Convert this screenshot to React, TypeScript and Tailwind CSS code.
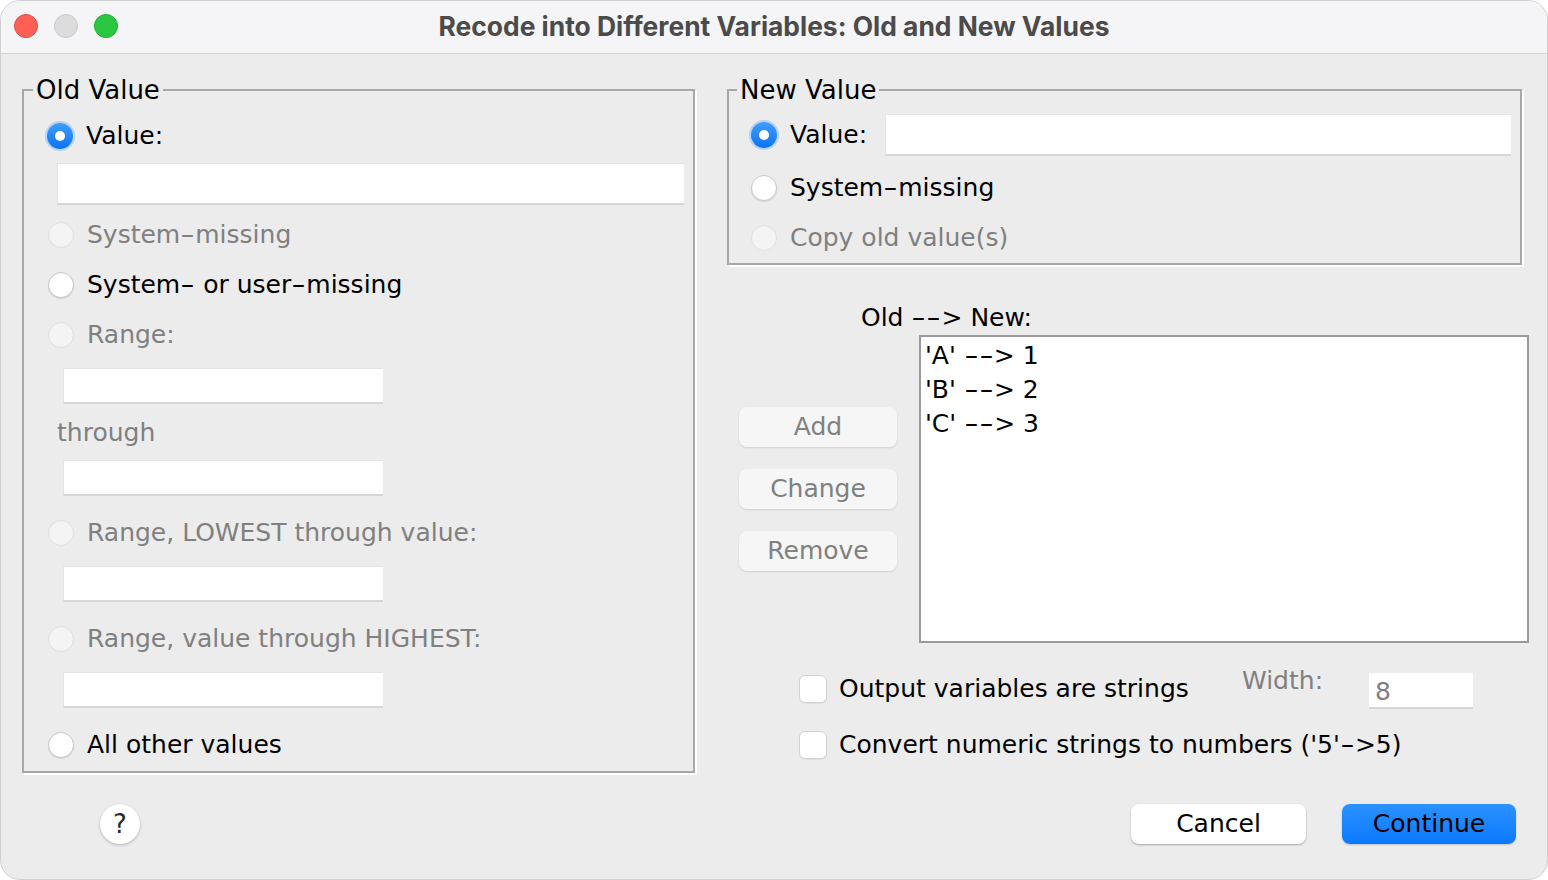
import React from "react";

type RadioState = "on" | "off" | "disabled";

const FONT = "font-['DejaVu_Sans',sans-serif]";

// the dialog font draws "-" much wider than DejaVu does
function Txt({ children }: { children: string }) {
  const parts = children.split("-");
  return (
    <>
      {parts.map((p, i) => (
        <React.Fragment key={i}>
          {i > 0 && <span className="inline-block mx-[3px] scale-x-[1.6]">-</span>}
          {p}
        </React.Fragment>
      ))}
    </>
  );
}

function Radio({ state }: { state: RadioState }) {
  if (state === "on") {
    return (
      <span className="w-[26px] h-[26px] shrink-0 rounded-full bg-gradient-to-b from-[#3f9dff] to-[#0a72f2] shadow-[0_0_0_2px_rgba(80,160,255,0.35)] flex items-center justify-center">
        <span className="w-[10px] h-[10px] rounded-full bg-white" />
      </span>
    );
  }
  if (state === "off") {
    return (
      <span className="w-[26px] h-[26px] shrink-0 rounded-full bg-white border border-[#c8c8c8] shadow-[0_1px_1px_rgba(0,0,0,0.10)]" />
    );
  }
  return (
    <span className="w-[26px] h-[26px] shrink-0 rounded-full bg-[#f4f4f4] border border-[#dedede]" />
  );
}

function RadioRow({
  state,
  label,
  className = "",
}: {
  state: RadioState;
  label: string;
  className?: string;
}) {
  return (
    <div className={`flex items-center h-[40px] gap-[13px] ${className}`}>
      <Radio state={state} />
      <span className={state === "disabled" ? "text-[#808080]" : "text-black"}>
        <Txt>{label}</Txt>
      </span>
    </div>
  );
}

function Field({ className = "" }: { className?: string }) {
  return (
    <div
      className={`bg-white border-t border-l border-[#e4e4e4] border-b-2 border-b-[#d6d6d6] ${className}`}
    />
  );
}

function Checkbox() {
  return (
    <span className="w-[28px] h-[28px] shrink-0 rounded-[6px] bg-white border border-[#d2d2d2] shadow-[0_1px_1px_rgba(0,0,0,0.06)]" />
  );
}

function SideButton({ label }: { label: string }) {
  return (
    <div className="w-[158px] h-[40px] rounded-[8px] bg-[#f6f6f6] shadow-[0_1px_2px_rgba(0,0,0,0.12)] flex items-center justify-center text-[#808080]">
      {label}
    </div>
  );
}

export default function App() {
  const mappings = ["'A' --> 1", "'B' --> 2", "'C' --> 3"];

  return (
    <div className="w-[1548px] h-[880px] bg-white">
      <div
        className={`w-[1548px] h-[880px] rounded-[20px] overflow-hidden border border-[#d0d0d0] bg-[#ececec] ${FONT} text-[25px] leading-[30px]`}
      >
        {/* TITLE BAR */}
        <div className="h-[53px] pb-[3px] bg-[#f5f5f7] border-b border-[#d4d4d4] flex items-center relative">
          <div className="flex items-center gap-[16px] ml-[13px]">
            <span className="w-[24px] h-[24px] rounded-full bg-[#ff5f57] border border-[#e24b41]" />
            <span className="w-[24px] h-[24px] rounded-full bg-[#dcdcdc] border border-[#c9c9c9]" />
            <span className="w-[24px] h-[24px] rounded-full bg-[#2ac840] border border-[#1fad2f]" />
          </div>
          <div className="absolute inset-0 pb-[3px] flex items-center justify-center font-['Inter',sans-serif] font-bold text-[26.4px] text-[#4b4b4b]">
            Recode into Different Variables: Old and New Values
          </div>
        </div>

        {/* BODY */}
        <div className="flex items-start pt-[21px]">
          {/* OLD VALUE */}
          <fieldset className="ml-[21px] w-[673px] min-w-0 border-2 border-[#a8a8a8] shadow-[2px_2px_0_#ffffff] pb-[6px]">
            <legend className="ml-[9px] px-[3px] text-[26px] leading-[30px] text-black">
              Old Value
            </legend>
            <RadioRow state="on" label="Value:" className="mt-[11px] ml-[23px]" />
            <Field className="mt-[7px] ml-[33px] w-[627px] h-[42px]" />
            <RadioRow state="disabled" label="System-missing" className="mt-[10px] ml-[24px]" />
            <RadioRow state="off" label="System- or user-missing" className="mt-[10px] ml-[24px]" />
            <RadioRow state="disabled" label="Range:" className="mt-[10px] ml-[24px]" />
            <Field className="mt-[13px] ml-[39px] w-[320px] h-[36px]" />
            <div className="mt-[14px] ml-[33px] h-[30px] text-[#808080]">through</div>
            <Field className="mt-[12px] ml-[39px] w-[320px] h-[36px]" />
            <RadioRow
              state="disabled"
              label="Range, LOWEST through value:"
              className="mt-[17px] ml-[24px]"
            />
            <Field className="mt-[13px] ml-[39px] w-[320px] h-[36px]" />
            <RadioRow
              state="disabled"
              label="Range, value through HIGHEST:"
              className="mt-[17px] ml-[24px]"
            />
            <Field className="mt-[13px] ml-[39px] w-[320px] h-[36px]" />
            <RadioRow state="off" label="All other values" className="mt-[17px] ml-[24px]" />
          </fieldset>

          {/* RIGHT COLUMN */}
          <div className="ml-[32px] flex flex-col">
            <fieldset className="w-[795px] min-w-0 border-2 border-[#a8a8a8] shadow-[2px_2px_0_#ffffff] pb-[5px]">
              <legend className="ml-[8px] px-[3px] text-[26px] leading-[30px] text-black">
                New Value
              </legend>
              <div className="flex items-center h-[42px] mt-[9px] ml-[22px]">
                <Radio state="on" />
                <span className="ml-[13px] w-[95px] text-black">Value:</span>
                <Field className="w-[626px] h-[42px]" />
              </div>
              <RadioRow state="off" label="System-missing" className="mt-[12px] ml-[22px]" />
              <RadioRow state="disabled" label="Copy old value(s)" className="mt-[10px] ml-[22px]" />
            </fieldset>

            <div className="mt-[38px] ml-[134px] h-[30px] text-black">
              Old <Txt>--</Txt>&gt; New:
            </div>

            <div className="flex items-start mt-[2px]">
              <div className="ml-[12px] pt-[72px] flex flex-col gap-[22px]">
                <SideButton label="Add" />
                <SideButton label="Change" />
                <SideButton label="Remove" />
              </div>
              <div className="ml-[22px] w-[610px] h-[308px] bg-white border-2 border-[#9a9a9a] pt-[2px] pl-[4px]">
                {mappings.map((m) => (
                  <div key={m} className="h-[34px] leading-[34px] text-black">
                    <Txt>{m}</Txt>
                  </div>
                ))}
              </div>
            </div>

            <div className="flex items-center h-[36px] mt-[28px] ml-[72px]">
              <Checkbox />
              <span className="ml-[12px] w-[403px] text-black">Output variables are strings</span>
              <span className="w-[127px] mb-[16px] text-[#808080]">Width:</span>
              <div className="w-[104px] h-[36px] mt-[4px] bg-white border-b-2 border-[#d6d6d6] pl-[6px] text-[#808080] leading-[38px]">
                8
              </div>
            </div>
            <div className="flex items-center h-[36px] mt-[20px] ml-[72px]">
              <Checkbox />
              <span className="ml-[12px] text-black">
                Convert numeric strings to numbers ('5'<Txt>-</Txt>&gt;5)
              </span>
            </div>
          </div>
        </div>

        {/* FOOTER */}
        <div className="flex items-center h-[40px] mt-[31px]">
          <div className="ml-[99px] w-[40px] h-[40px] rounded-full bg-white shadow-[0_1px_3px_rgba(0,0,0,0.25)] flex items-center justify-center text-[26px] text-[#2a2a2a]">
            ?
          </div>
          <div className="ml-auto w-[175px] h-[40px] rounded-[8px] bg-white shadow-[0_1px_2px_rgba(0,0,0,0.3)] flex items-center justify-center text-black">
            Cancel
          </div>
          <div className="ml-[36px] mr-[31px] w-[174px] h-[40px] rounded-[8px] bg-gradient-to-b from-[#2a92ff] to-[#0a78ff] shadow-[0_1px_2px_rgba(0,0,0,0.2)] flex items-center justify-center text-black">
            Continue
          </div>
        </div>
      </div>
    </div>
  );
}
